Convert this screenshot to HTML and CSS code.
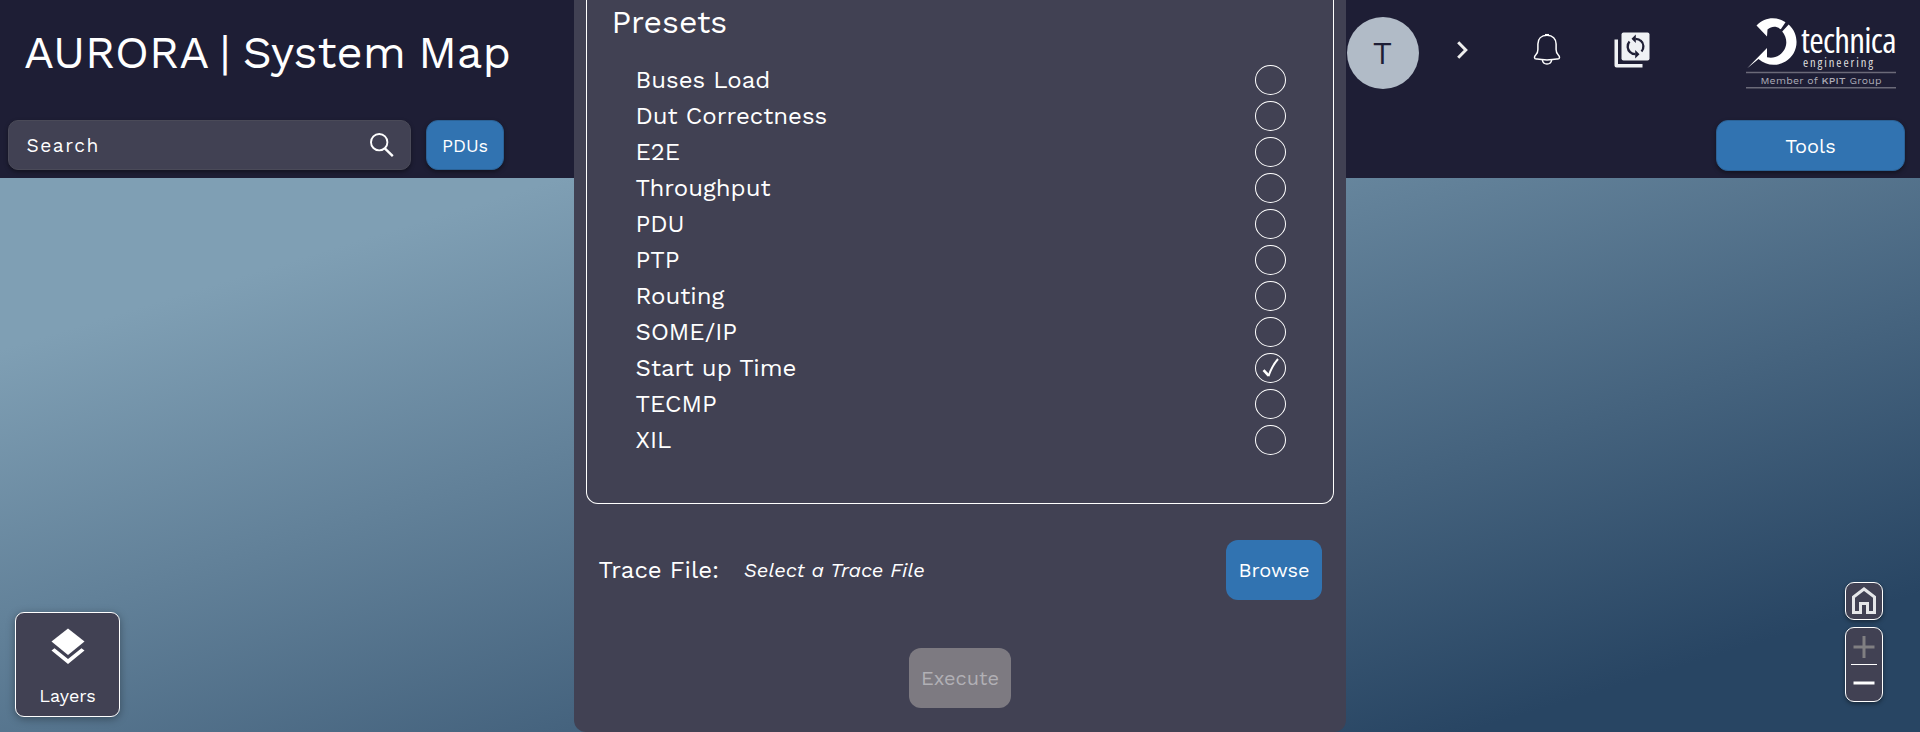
FILE: index.html
```html
<!DOCTYPE html>
<html lang="en">
<head>
<meta charset="utf-8">
<title>AURORA | System Map</title>
<link rel="stylesheet" href="styles.css">
</head>
<body>
<div class="app">
  <header class="header">
    <div class="header-left">
      <h1 class="title">AURORA | System Map</h1>
      <div class="controls">
        <div class="search"><span class="search-text">Search</span>
          <svg class="search-icon" width="26" height="26" viewBox="0 0 26 26" fill="none" stroke="#fff"><circle cx="10.200" cy="10.200" r="8.200" stroke-width="1.900"/><path d="M15.800 16.300L23.800 24.200" stroke-width="2.400"/></svg>
        </div>
        <button class="btn btn-pdus"><span>PDUs</span></button>
      </div>
    </div>
    <div class="header-right">
      <div class="toolbar">
        <div class="avatar">T</div>
        <svg class="chevron" width="12" height="18" viewBox="0 0 12 18" fill="none" stroke="#eee" stroke-width="3"><path d="M1.2 1.2L8.8 9L1.2 16.8"/></svg>
        <svg class="bell" width="28" height="32" viewBox="0 0 28 32" fill="none" stroke="#fff" stroke-width="1.5"><path d="M14 2.3C8.300 2.300 4.900 5.800 4.900 11v5.500c0 2.800-.5 3.900-2.200 5.500-.8.800-1.300 1.600-1.200 2.700.1 1 .9 1.400 1.900 1.400 3.500-.2 6.300.8 10.600.8s7.100-1 10.600-.8c1 0 1.800-.4 1.900-1.400.1-1.100-.4-1.900-1.200-2.700-1.700-1.600-2.200-2.700-2.200-5.500V11C23.100 5.800 19.700 2.300 14 2.300Z"/><path d="M9.400 27c.3 2.400 2.200 4 4.600 4s4.300-1.600 4.600-4"/><path d="M12 1.700h4"/></svg>
        <svg class="sync" width="36" height="36" viewBox="0 0 36 36"><path d="M.5 7.500h3.500v24.500h24.500v3.500H2.500a2 2 0 0 1-2-2z" fill="#eff1f4"/><rect x="7.500" y="0.500" width="28" height="28" rx="2" fill="#eff1f4"/><path d="M16.300 20.300A7.700 7.700 0 0 1 15.500 9.500M26.800 8.700A7.700 7.700 0 0 1 27.500 19.500M21.500 6.800A7.700 7.700 0 0 1 27.300 9.300M21.500 22.200A7.700 7.700 0 0 1 15.700 19.700" fill="none" stroke="#1f1f35" stroke-width="2.300"/><path d="M21.800 2.500v8.600l-4.300-4.300zM21.200 17.900v8.600l4.300-4.300z" fill="#1f1f35"/></svg>
        <svg class="logo" width="152" height="82" viewBox="0 -8 152 82">
          <path d="M10.500 8.500C19 -.5 31 -.5 39.500 5.200L34.800 12.200C30 9 26 9 21.500 12.500L21 19.500Z" fill="#fff"/>
          <path d="M42.700 7.500C55 19 52 37 39.500 44.500C30 50 20 48.500 12.500 42L1.200 51.200L21 31V40.200C25.500 41.200 29.500 40.500 33.500 38C41.500 32.500 42.500 22 36.200 14.500Z" fill="#fff"/>
          <text x="55" y="35.500" class="logo-name" textLength="95.500" lengthAdjust="spacing">technica</text>
          <text x="57" y="49.500" class="logo-sub" textLength="70" lengthAdjust="spacing">engineering</text>
          <path d="M0 55.500h150M0 70.800h150" stroke="#6b6a79" stroke-width="1.500"/>
          <text x="14.500" y="66.800" class="logo-member" textLength="121">Member of <tspan class="logo-kpit">KPIT</tspan> Group</text>
        </svg>
      </div>
      <button class="btn btn-tools"><span>Tools</span></button>
    </div>
  </header>
  <main class="map"></main>

  <section class="dialog">
    <div class="presets">
      <h2 class="presets-title">Presets</h2>
      <ul class="list">
        <li><span>Buses Load</span><i class="radio"></i></li>
        <li><span>Dut Correctness</span><i class="radio"></i></li>
        <li><span>E2E</span><i class="radio"></i></li>
        <li><span>Throughput</span><i class="radio"></i></li>
        <li><span>PDU</span><i class="radio"></i></li>
        <li><span>PTP</span><i class="radio"></i></li>
        <li><span>Routing</span><i class="radio"></i></li>
        <li><span>SOME/IP</span><i class="radio"></i></li>
        <li><span>Start up Time</span><i class="radio"><svg width="18" height="20" viewBox="0 0 18 20" fill="none" stroke="#fff"><path d="M1.500 12.200L6.600 17.500" stroke-width="2.600"/><path d="M6.500 18.300C8.500 12 11.500 6 16 1" stroke-width="2"/></svg></i></li>
        <li><span>TECMP</span><i class="radio"></i></li>
        <li><span>XIL</span><i class="radio"></i></li>
      </ul>
    </div>
    <div class="trace">
      <span class="trace-label">Trace File:</span>
      <span class="trace-value">Select a Trace File</span>
      <button class="btn btn-browse"><span>Browse</span></button>
    </div>
    <button class="btn btn-execute" disabled><span>Execute</span></button>
  </section>

  <button class="layers">
    <svg width="34" height="37" viewBox="0 0 34 37" fill="#fff"><path d="M17 .5L33.500 13.500L17 27L.5 13.500Z"/><path d="M.5 22.500L3.500 20.200L17 31L30.500 20.200L33.500 22.500L17 36Z"/></svg>
    <span>Layers</span>
  </button>

  <nav class="map-nav">
    <button class="home"><svg width="26" height="28" viewBox="0 0 26 28" fill="none" stroke="#e6e7e9" stroke-width="3"><path d="M2.500 25.500V10L13 2L23.500 10V25.500H16.500V16.500H9.500V25.500Z"/></svg></button>
    <div class="zoom">
      <svg width="22" height="22" viewBox="0 0 22 22" stroke="#807f82" stroke-width="3"><path d="M.5 11h21M11 0v22"/></svg>
      <hr>
      <svg width="22" height="22" viewBox="0 0 22 22" stroke="#fff" stroke-width="3"><path d="M.5 11h21"/></svg>
    </div>
  </nav>
</div>
</body>
</html>
```
FILE: styles.css
```css
* { box-sizing: border-box; }

body {
  margin: 0;
  overflow: hidden;
  font-family: "Work Sans", Inter, sans-serif;
  color: #fff;
}

h1, h2, ul { margin: 0; padding: 0; font-weight: 400; }

button { font: inherit; color: inherit; padding: 0; border: 0; }

span { white-space: nowrap; }

.app {
  position: relative;
  display: flex;
  flex-direction: column;
  width: 1920px;
  height: 732px;
  background: linear-gradient(163deg, #7f9fb4 26.5%, #284563 89.5%);
}

.header {
  display: flex;
  justify-content: space-between;
  height: 178px;
  background: #1e1e35;
}

.map { flex: 1; }

.header-left { padding: 29px 0 0 8px; }

.title {
  height: 48px;
  padding-left: 16px;
  font-size: 45.4px;
  line-height: 48px;
  word-spacing: -3.2px;
  white-space: nowrap;
}

.controls { display: flex; gap: 15px; margin-top: 43px; }

.search {
  display: flex;
  align-items: center;
  justify-content: space-between;
  width: 403px;
  height: 50px;
  padding: 0 15px 0 17.5px;
  border: 1px solid #4a4a58;
  border-radius: 10px;
  background: #414153;
  box-shadow: 0 2px 4px rgba(0, 0, 0, 0.4);
}

.search-text { font-size: 19.2px; letter-spacing: 1.5px; }
.search-icon { margin-top: -1px; }

.btn {
  display: flex;
  align-items: center;
  justify-content: center;
  border-radius: 12px;
  background: #3173b1;
}

.btn-pdus {
  width: 78px;
  height: 50px;
  border: 1px solid #2b6296;
  box-shadow: 0 2px 4px rgba(0, 0, 0, 0.4);
  font-size: 18px;
}

.header-right {
  display: flex;
  flex-direction: column;
  align-items: flex-end;
  padding: 17px 15px 0 0;
}

.toolbar { display: flex; align-items: flex-start; height: 103px; padding-right: 7px; }

.avatar {
  width: 72px;
  height: 72px;
  border-radius: 50%;
  background: #b1bbc7;
  color: #1e1e35;
  font-size: 32px;
  line-height: 73px;
  text-align: center;
}

.chevron { margin: 24px 0 0 38px; }
.bell { margin: 16px 0 0 64px; }
.sync { margin: 14.5px 0 0 53.5px; }
.logo { margin: -8px 0 0 96px; }

.logo-name { font-family: "Open Sans", sans-serif; font-size: 35px; font-weight: 500; font-stretch: 75%; fill: #fff; }
.logo-sub { font-family: "Open Sans", sans-serif; font-size: 12.5px; font-stretch: 75%; fill: #ddd; }
.logo-member { font-size: 10.5px; fill: #aeadb8; }
.logo-kpit { font-weight: 500; }

.btn-tools {
  width: 189px;
  height: 51px;
  padding-top: 1px;
  border: 1px solid #2b6296;
  box-shadow: 0 2px 4px rgba(0, 0, 0, 0.4);
  font-size: 20px;
}

.dialog {
  position: absolute;
  top: 0;
  left: 574px;
  display: flex;
  flex-direction: column;
  width: 772px;
  height: 732px;
  padding: 0 12px;
  border-radius: 0 0 12px 12px;
  background: #414153;
}

.presets {
  height: 504px;
  padding: 2px 47px 0 24.5px;
  border: 1px solid #fff;
  border-top: 0;
  border-radius: 0 0 12px 12px;
}

.presets-title { font-size: 32px; line-height: 40px; }

.list { margin-top: 20px; padding-left: 24px; list-style: none; }

.list li {
  display: flex;
  align-items: center;
  justify-content: space-between;
  height: 36px;
  font-size: 24px;
}

.radio {
  display: flex;
  align-items: center;
  justify-content: center;
  width: 31px;
  height: 30px;
  border: 1px solid #fff;
  border-radius: 50%;
}

.trace { display: flex; align-items: center; margin-top: 36px; padding: 0 12px 0 12.5px; }

.trace-label { font-size: 24px; }

.trace-value {
  margin-left: 24.5px;
  font-size: 20.3px;
  font-style: italic;
}

.btn-browse {
  width: 96px;
  height: 60px;
  margin-left: auto;
  font-size: 20px;
}

.btn-execute {
  align-self: center;
  width: 102px;
  height: 60px;
  margin-top: 48px;
  background: #7d7a81;
  color: #b1b0b5;
  font-size: 20px;
}

.layers {
  position: absolute;
  top: 612px;
  left: 15px;
  display: flex;
  flex-direction: column;
  align-items: center;
  gap: 20px;
  width: 105px;
  height: 105px;
  padding-top: 15px;
  border: 1px solid #fff;
  border-radius: 9px;
  background: #414153;
  box-shadow: 0 2px 8px rgba(0, 0, 0, 0.35);
  font-size: 18px;
}

.map-nav {
  position: absolute;
  top: 582px;
  left: 1845px;
  display: flex;
  flex-direction: column;
  gap: 7px;
  width: 38px;
}

.home, .zoom {
  display: flex;
  flex-direction: column;
  align-items: center;
  border: 1px solid #fff;
  border-radius: 9px;
  background: #414153;
  box-shadow: 0 2px 4px rgba(0, 0, 0, 0.4);
}

.home { height: 38px; justify-content: center; }
.zoom { height: 75px; padding-top: 8px; }
.zoom hr { width: 26px; height: 1px; margin: 6px 0 7px; border: 0; background: #fff; }
```
